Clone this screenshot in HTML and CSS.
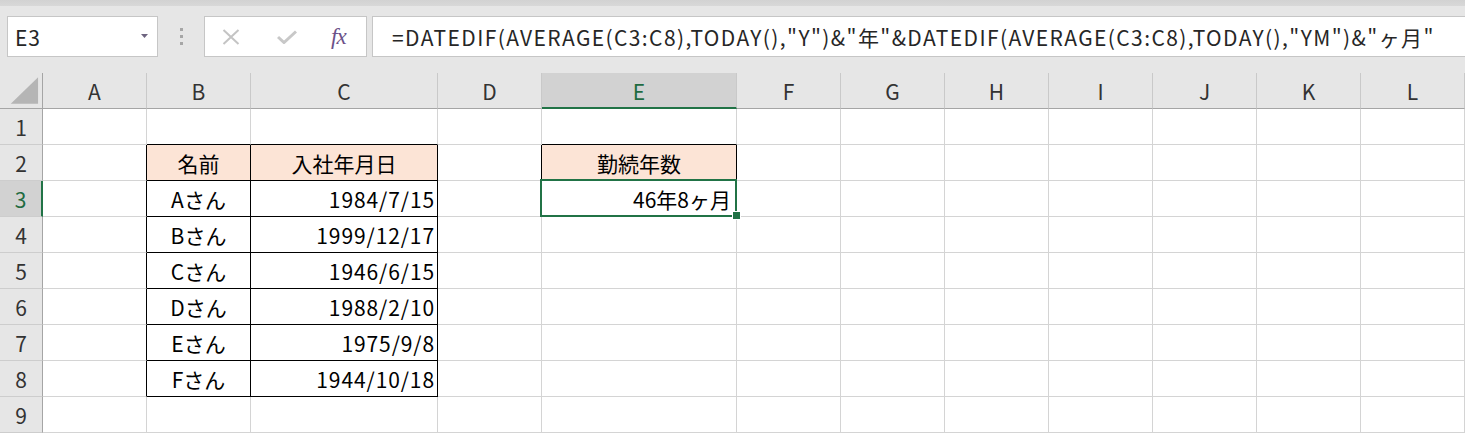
FILE: index.html
```html
<!DOCTYPE html>
<html lang="ja">
<head>
<meta charset="utf-8">
<title>Excel</title>
<link rel="stylesheet" href="styles.css">
</head>
<body>
<div class="app">
  <div class="topstrip"></div>
  <div class="toolbar">
    <div class="namebox">
      <span class="nb-text">E3</span>
      <svg class="nb-arrow" width="7" height="4" viewBox="0 0 7 4"><polygon points="0,0 7,0 3.5,4" fill="#6e6480"/></svg>
    </div>
    <div class="grip"><i></i><i></i><i></i></div>
    <div class="fxbox">
      <svg class="ic-x" width="18" height="16" viewBox="0 0 18 16"><path d="M1.5 1 L16.5 15 M16.5 1 L1.5 15" stroke="#c4c4c4" stroke-width="2" fill="none"/></svg>
      <svg class="ic-check" width="20" height="14" viewBox="0 0 20 14"><path d="M1 7 L7 12.5 L19 1.5" stroke="#c8c8c8" stroke-width="3" fill="none"/></svg>
      <span class="ic-fx">fx</span>
    </div>
    <div class="formula">=DATEDIF(AVERAGE(C3:C8),TODAY(),"Y")&amp;"年"&amp;DATEDIF(AVERAGE(C3:C8),TODAY(),"YM")&amp;"ヶ月"</div>
  </div>
  <div class="sheet">
    <!-- header row -->
    <div class="corner"><svg width="43" height="36" viewBox="0 0 43 36"><polygon points="39,4 39,31 11,31" fill="#b5b5b5"/></svg></div>
    <div class="ch">A</div><div class="ch">B</div><div class="ch">C</div><div class="ch">D</div><div class="ch ch-sel">E</div><div class="ch">F</div><div class="ch">G</div><div class="ch">H</div><div class="ch">I</div><div class="ch">J</div><div class="ch">K</div><div class="ch">L</div>
    <!-- row 1 -->
    <div class="rh">1</div>
    <div class="c"></div><div class="c bt"></div><div class="c bt"></div><div class="c"></div><div class="c bt"></div><div class="c"></div><div class="c"></div><div class="c"></div><div class="c"></div><div class="c"></div><div class="c"></div><div class="c"></div>
    <!-- row 2 -->
    <div class="rh">2</div>
    <div class="c bl"></div><div class="c bk fill ctr">名前</div><div class="c bk fill ctr">入社年月日</div><div class="c bl"></div><div class="c bk fill ctr">勤続年数</div><div class="c"></div><div class="c"></div><div class="c"></div><div class="c"></div><div class="c"></div><div class="c"></div><div class="c"></div>
    <!-- row 3 -->
    <div class="rh rh-sel">3</div>
    <div class="c bl"></div><div class="c bk ctr">Aさん</div><div class="c bk num date">1984/7/15</div><div class="c bl"></div><div class="c bk num active">46年8ヶ月<span class="sel"></span><span class="handle"></span></div><div class="c"></div><div class="c"></div><div class="c"></div><div class="c"></div><div class="c"></div><div class="c"></div><div class="c"></div>
    <!-- row 4 -->
    <div class="rh">4</div>
    <div class="c bl"></div><div class="c bk ctr">Bさん</div><div class="c bk num date">1999/12/17</div><div class="c"></div><div class="c"></div><div class="c"></div><div class="c"></div><div class="c"></div><div class="c"></div><div class="c"></div><div class="c"></div><div class="c"></div>
    <!-- row 5 -->
    <div class="rh">5</div>
    <div class="c bl"></div><div class="c bk ctr">Cさん</div><div class="c bk num date">1946/6/15</div><div class="c"></div><div class="c"></div><div class="c"></div><div class="c"></div><div class="c"></div><div class="c"></div><div class="c"></div><div class="c"></div><div class="c"></div>
    <!-- row 6 -->
    <div class="rh">6</div>
    <div class="c bl"></div><div class="c bk ctr">Dさん</div><div class="c bk num date">1988/2/10</div><div class="c"></div><div class="c"></div><div class="c"></div><div class="c"></div><div class="c"></div><div class="c"></div><div class="c"></div><div class="c"></div><div class="c"></div>
    <!-- row 7 -->
    <div class="rh">7</div>
    <div class="c bl"></div><div class="c bk ctr">Eさん</div><div class="c bk num date">1975/9/8</div><div class="c"></div><div class="c"></div><div class="c"></div><div class="c"></div><div class="c"></div><div class="c"></div><div class="c"></div><div class="c"></div><div class="c"></div>
    <!-- row 8 -->
    <div class="rh">8</div>
    <div class="c bl"></div><div class="c bk ctr">Fさん</div><div class="c bk num date">1944/10/18</div><div class="c"></div><div class="c"></div><div class="c"></div><div class="c"></div><div class="c"></div><div class="c"></div><div class="c"></div><div class="c"></div><div class="c"></div>
    <!-- row 9 -->
    <div class="rh">9</div>
    <div class="c"></div><div class="c"></div><div class="c"></div><div class="c"></div><div class="c"></div><div class="c"></div><div class="c"></div><div class="c"></div><div class="c"></div><div class="c"></div><div class="c"></div><div class="c"></div>
  </div>
</div>
</body>
</html>
```

FILE: styles.css
```css
* { box-sizing: border-box; }
html, body { margin: 0; padding: 0; }
body {
  background: #e6e6e6;
  font-family: "Noto Sans CJK JP", "Noto Sans", sans-serif;
  overflow: hidden;
}
.app { width: 1465px; height: 433px; overflow: hidden; }

.topstrip {
  height: 6px;
  background: linear-gradient(#d2d2d2, #d8d8d8);
}
.toolbar {
  display: flex;
  align-items: stretch;
  height: 67px;
  padding: 10px 0 16px 7px;
}
.namebox {
  width: 151px;
  background: #fff;
  border: 1px solid #c6c6c6;
  display: flex;
  align-items: center;
  justify-content: space-between;
  padding: 0 9px 0 7px;
}
.nb-text { font-size: 21px; color: #262626; line-height: 1; padding-top: 2px; letter-spacing: 1px; }
.nb-arrow { margin-top: -2px; }
.grip {
  width: 46px;
  display: flex;
  flex-direction: column;
  align-items: center;
  justify-content: center;
  gap: 4px;
}
.grip i { display: block; width: 3px; height: 3px; background: #a6a6a6; }
.fxbox {
  width: 163px;
  background: #fff;
  border: 1px solid #c6c6c6;
  display: flex;
  align-items: center;
  padding: 0 0 0 17px;
}
.ic-x { margin-right: 37px; }
.ic-check { margin-right: 34px; }
.ic-fx {
  font-family: "Liberation Serif", "DejaVu Serif", serif;
  font-style: italic;
  font-size: 23px;
  color: #6b5189;
  letter-spacing: -1px;
}
.formula {
  flex: 1;
  margin-left: 5px;
  margin-right: -3px;
  background: #fff;
  border: 1px solid #c6c6c6;
  font-size: 21px;
  color: #262626;
  display: flex;
  align-items: center;
  padding: 1px 0 0 19px;
  white-space: nowrap;
  letter-spacing: 1.4px;
}

.sheet {
  display: grid;
  grid-template-columns: 43px 104px 104px 187px 104px 195px repeat(7, 104px);
  grid-auto-rows: 36px;
  background: #fff;
}
.corner, .ch, .rh {
  background: #e6e6e6;
  color: #333;
  font-size: 21px;
  display: flex;
  align-items: center;
  justify-content: center;
}
.corner { border-right: 1px solid #a5a5a5; border-bottom: 1px solid #a5a5a5; }
.ch { border-right: 1px solid #c9c9c9; border-bottom: 1px solid #a5a5a5; }
.ch-sel { background: #d2d2d2; color: #1f6b41; border-bottom: 2px solid #217346; padding-top: 1px; }
.rh { border-right: 1px solid #a5a5a5; border-bottom: 1px solid #cdcdcd; }
.rh-sel { background: #d2d2d2; color: #1f6b41; border-right: 2px solid #217346; }

.c {
  border-right: 1px solid #d4d4d4;
  border-bottom: 1px solid #d4d4d4;
  font-size: 21px;
  color: #000;
  display: flex;
  align-items: center;
  white-space: nowrap;
}
.ctr { justify-content: center; }
.num { justify-content: flex-end; padding-right: 3px; }
.date { letter-spacing: 0.9px; padding-right: 2px; }
.fill { background: #fce4d6; }
.bk { border-right-color: #000; border-bottom-color: #000; }
.bl { border-right-color: #000; }
.bt { border-bottom-color: #000; }

.active { position: relative; padding-right: 5px; }
.sel {
  position: absolute;
  left: -2px;
  top: -2px;
  width: 197px;
  height: 38px;
  border: 2px solid #217346;
}
.handle {
  position: absolute;
  left: 191px;
  top: 31px;
  width: 7px;
  height: 7px;
  background: #217346;
  border: 1px solid #fff;
  box-sizing: content-box;
  margin: -1px 0 0 -1px;
}
```
